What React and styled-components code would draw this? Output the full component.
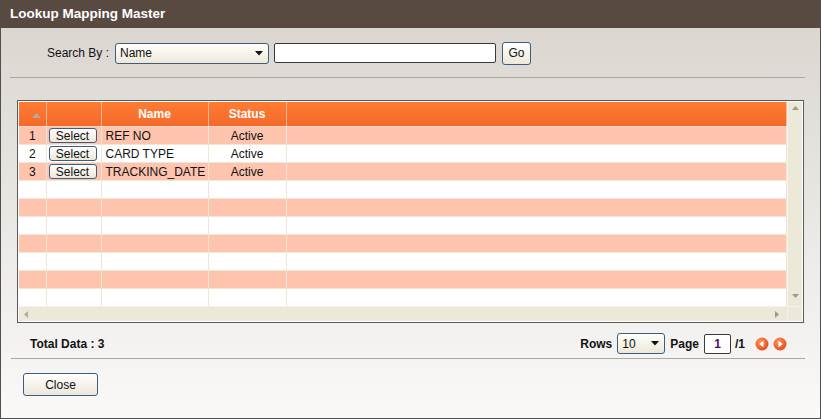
import styled, { createGlobalStyle } from "styled-components"

const GlobalStyle = createGlobalStyle`
  body {
    margin: 0;
    font-family: "Liberation Sans", Arial, sans-serif;
    font-size: 12px;
    color: #111;
  }
`

const rows = [
  { id: 1, name: "REF NO", status: "Active" },
  { id: 2, name: "CARD TYPE", status: "Active" },
  { id: 3, name: "TRACKING_DATE", status: "Active" },
]

const Window = styled.div`
  width: 821px;
  height: 419px;
  box-sizing: border-box;
  border: 1px solid #4f4f4f;
  border-top: none;
  display: flex;
  flex-direction: column;
  overflow: hidden;
`

const TitleBar = styled.div`
  height: 28px;
  flex: none;
  background: #584a40;
  color: #fff;
  font-weight: bold;
  font-size: 13.5px;
  display: flex;
  align-items: center;
  padding-left: 9px;
  padding-bottom: 1px;
  box-sizing: border-box;
`

const Body = styled.div`
  flex: 1;
  background: linear-gradient(#dbd6d0, #faf9f8);
  display: flex;
  flex-direction: column;
`

const SearchRow = styled.div`
  display: flex;
  align-items: center;
  padding: 14px 0 0 46px;
  height: 22px;
`

const Label = styled.span`
  font-weight: ${p => (p.$bold ? "bold" : "normal")};
  margin-right: ${p => p.$gap || 0}px;
`

const FakeSelect = styled.div`
  width: ${p => p.$width}px;
  height: 21px;
  box-sizing: border-box;
  border: 1px solid #3c5d82;
  border-radius: 3px;
  background: linear-gradient(#fffffb, #ede8d8);
  display: flex;
  align-items: center;
  justify-content: space-between;
  padding: 0 5px 0 4px;
  margin-right: ${p => p.$gap || 0}px;
`

const TextBox = styled.input`
  width: ${p => p.$width}px;
  height: 20px;
  box-sizing: border-box;
  border: 1px solid #3a3a3a;
  border-radius: 2px;
  background: #fff;
  font: inherit;
  color: #4a0f6a;
  text-align: ${p => p.$align || "left"};
  margin-right: ${p => p.$gap || 0}px;
  padding: 0 3px;
  outline: none;
`

const Button = styled.button`
  width: ${p => p.$width}px;
  height: ${p => p.$height}px;
  box-sizing: border-box;
  border: 1px solid #3c5d82;
  border-radius: 3px;
  background: linear-gradient(#ffffff, #ece7da);
  font: inherit;
  font-size: 12px;
  color: #111;
  padding: 0;
  display: flex;
  align-items: center;
  justify-content: center;
`

const Divider = styled.div`
  height: 1px;
  background: #aba79e;
  margin: ${p => p.$margin};
`

const GridBox = styled.div`
  margin: 22px 0 0 16px;
  width: 787px;
  height: 223px;
  box-sizing: border-box;
  border: 1px solid #5a5a5a;
  padding: 1px;
  background: #fff;
  display: grid;
  grid-template-columns: 1fr 15px;
  grid-template-rows: 1fr 15px;
`

const TableArea = styled.div`
  overflow: hidden;
  background: #fff;
`

const Table = styled.table`
  width: 100%;
  border-collapse: collapse;
  table-layout: fixed;
`

const HeadCell = styled.th`
  height: 24px;
  padding: 0;
  background: linear-gradient(#ff7b33, #f26a2b);
  color: #fff;
  font-weight: bold;
  font-size: 12px;
  border-right: 1px solid #fbb895;
  border-bottom: 1px solid #f5d8c6;
`

const Row = styled.tr`
  background: ${p => (p.$alt ? "#fec4ae" : "#fff")};
`

const Cell = styled.td`
  height: 17px;
  padding: 0 0 0 ${p => p.$pad || 0}px;
  border-right: 1px solid #ede8d6;
  border-bottom: 1px solid #ede8d6;
  text-align: ${p => p.$align || "left"};
  white-space: nowrap;
  overflow: hidden;
  vertical-align: middle;
`

const SelectBtn = styled(Button)`
  margin-left: 2px;
`

const VScroll = styled.div`
  background: #ece9d9;
  border-left: 1px solid #f4f2ea;
  display: flex;
  flex-direction: column;
  justify-content: space-between;
  align-items: center;
  padding: 4px 0 8px;
`

const HScroll = styled.div`
  background: #ece9d9;
  border-top: 1px solid #f4f2ea;
  display: flex;
  justify-content: space-between;
  align-items: center;
  padding: 0 8px 0 5px;
`

const Corner = styled.div`
  background: #ece9d9;
  border-top: 1px solid #f4f2ea;
  border-left: 1px solid #f4f2ea;
`

const Footer = styled.div`
  display: flex;
  align-items: center;
  justify-content: space-between;
  height: 21px;
  margin-top: 10px;
  padding: 0 33px 0 29px;
  font-weight: bold;
`

const Pager = styled.div`
  display: flex;
  align-items: center;
`

const NavIcons = styled.div`
  display: flex;
  gap: 4px;
  margin-left: 10px;
`

const CloseRow = styled.div`
  padding: 14px 0 0 22px;
`

const Arrow = ({ dir, color = "#8a8a8a" }) => {
  const pts = {
    up: "0,4 3.5,0 7,4",
    down: "0,0 3.5,4 7,0",
    left: "4,0 0,3.5 4,7",
    right: "0,0 4,3.5 0,7",
  }[dir]
  const vertical = dir === "up" || dir === "down"
  return (
    <svg width={vertical ? 7 : 4} height={vertical ? 4 : 7}>
      <polygon points={pts} fill={color} />
    </svg>
  )
}

const NavButton = ({ dir }) => (
  <svg width="14" height="14" viewBox="0 0 14 14">
    <defs>
      <radialGradient id={`g-${dir}`} cx="0.4" cy="0.35" r="0.7">
        <stop offset="0" stopColor="#ff9a5a" />
        <stop offset="1" stopColor="#e0481a" />
      </radialGradient>
    </defs>
    <circle cx="7" cy="7" r="6.5" fill={`url(#g-${dir})`} />
    {dir === "left" ? (
      <polygon points="8.5,3.8 4.3,7 8.5,10.2" fill="#fff" />
    ) : (
      <polygon points="5.5,3.8 9.7,7 5.5,10.2" fill="#fff" />
    )}
  </svg>
)

const DropArrow = () => (
  <svg width="8" height="5">
    <polygon points="0,0 8,0 4,4.5" fill="#111" />
  </svg>
)

export default function App() {
  const emptyRows = Array.from({ length: 7 }, (_, i) => i + 4)

  return (
    <>
      <GlobalStyle />
      <Window>
        <TitleBar>Lookup Mapping Master</TitleBar>
        <Body>
          <SearchRow>
            <Label $gap={6}>Search By :</Label>
            <FakeSelect $width={154} $gap={5}>
              <span>Name</span>
              <DropArrow />
            </FakeSelect>
            <TextBox $width={222} $gap={6} defaultValue="" />
            <Button $width={29} $height={23}>Go</Button>
          </SearchRow>

          <Divider $margin="13px 15px 0 9px" />

          <GridBox>
            <TableArea>
              <Table>
                <colgroup>
                  <col style={{ width: 27 }} />
                  <col style={{ width: 55 }} />
                  <col style={{ width: 107 }} />
                  <col style={{ width: 78 }} />
                  <col />
                </colgroup>
                <thead>
                  <tr>
                    <HeadCell>
                      <svg width="9" height="5" style={{ marginLeft: 9, marginTop: 3 }}>
                        <polygon points="0,5 4.5,0 9,5" fill="#b5a9a0" />
                      </svg>
                    </HeadCell>
                    <HeadCell />
                    <HeadCell>Name</HeadCell>
                    <HeadCell>Status</HeadCell>
                    <HeadCell />
                  </tr>
                </thead>
                <tbody>
                  {rows.map((r, i) => (
                    <Row key={r.id} $alt={i % 2 === 0}>
                      <Cell $align="center">{r.id}</Cell>
                      <Cell>
                        <SelectBtn $width={48} $height={15}>Select</SelectBtn>
                      </Cell>
                      <Cell $pad={4}>{r.name}</Cell>
                      <Cell $align="center">{r.status}</Cell>
                      <Cell />
                    </Row>
                  ))}
                  {emptyRows.map(n => (
                    <Row key={n} $alt={n % 2 === 1}>
                      <Cell />
                      <Cell />
                      <Cell />
                      <Cell />
                      <Cell />
                    </Row>
                  ))}
                </tbody>
              </Table>
            </TableArea>
            <VScroll>
              <Arrow dir="up" color="#9a9a92" />
              <Arrow dir="down" color="#9a9a92" />
            </VScroll>
            <HScroll>
              <Arrow dir="left" color="#b0aea4" />
              <Arrow dir="right" color="#9a9a92" />
            </HScroll>
            <Corner />
          </GridBox>

          <Footer>
            <span>Total Data : 3</span>
            <Pager>
              <Label $bold $gap={5}>Rows</Label>
              <FakeSelect $width={48} $gap={5}>
                <span style={{ fontWeight: "normal" }}>10</span>
                <DropArrow />
              </FakeSelect>
              <Label $bold $gap={5}>Page</Label>
              <TextBox $width={27} $align="center" $gap={4} defaultValue="1" />
              <Label $bold>/1</Label>
              <NavIcons>
                <NavButton dir="left" />
                <NavButton dir="right" />
              </NavIcons>
            </Pager>
          </Footer>

          <Divider $margin="4px 15px 0 10px" />

          <CloseRow>
            <Button $width={75} $height={23}>Close</Button>
          </CloseRow>
        </Body>
      </Window>
    </>
  )
}
